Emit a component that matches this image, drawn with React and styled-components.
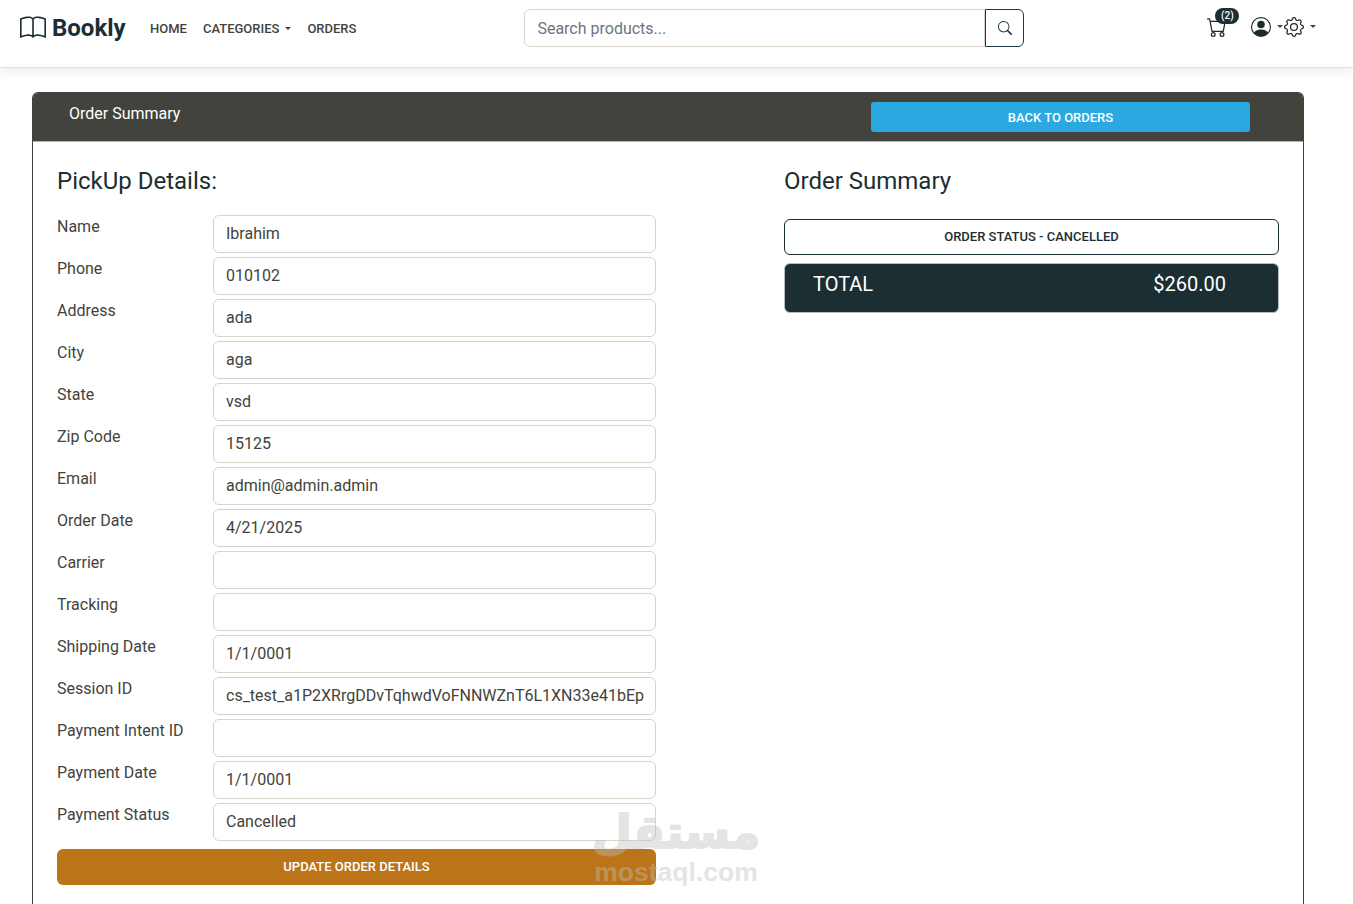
import React from 'react'
import styled, { createGlobalStyle } from 'styled-components'
import { BsBook, BsSearch, BsCart, BsPersonCircle, BsGear } from 'react-icons/bs'

const GlobalStyle = createGlobalStyle`
  html, body {
    margin: 0;
    padding: 0;
    background: #fff;
    height: 904px;
    overflow: hidden;
  }
  * { box-sizing: border-box; }
  body {
    font-family: Roboto, "Liberation Sans", sans-serif;
    font-size: 16px;
    color: #43433d;
  }
`

const Nav = styled.nav`
  display: flex;
  align-items: center;
  height: 68px;
  padding: 0 0 12px 20px;
  background: #fff;
  border-bottom: 1px solid #e4dfd6;
  box-shadow: 0 4px 10px rgba(0, 0, 0, 0.07);
`

const Brand = styled.div`
  display: flex;
  align-items: center;
  gap: 6px;
  width: 122px;
  font-size: 24px;
  font-weight: 700;
  color: #1b2e32;
  svg { font-size: 26px; }
`

const Menu = styled.div`
  display: flex;
  align-items: center;
  gap: 16px;
  margin: 1px 0 0 8px;
`

const MenuItem = styled.span`
  display: flex;
  align-items: center;
  font-size: 13px;
  font-weight: 500;
  color: #43433d;
`

const Caret = styled.i`
  display: inline-block;
  margin-left: ${(props) => props.$gap || 6}px;
  border-top: 3.5px solid #43433d;
  border-left: 3.5px solid transparent;
  border-right: 3.5px solid transparent;
`

const SearchBox = styled.div`
  display: flex;
  width: 500px;
  height: 38px;
  margin-left: 168px;
  margin-top: 1px;
`

const SearchInput = styled.div`
  flex: 1;
  display: flex;
  align-items: center;
  padding: 0 12px;
  border: 1px solid #d9d4c8;
  border-radius: 6px 0 0 6px;
  color: #6c757d;
`

const SearchButton = styled.div`
  width: 39px;
  display: flex;
  align-items: center;
  justify-content: center;
  border: 1px solid #1b3a44;
  border-radius: 0 6px 6px 0;
  color: #1b3a44;
  font-size: 14px;
`

const NavIcons = styled.div`
  display: flex;
  align-items: center;
  margin: 0 0 2px 183px;
  color: #1f2a2c;
`

const CartWrap = styled.div`
  position: relative;
  display: flex;
  width: 20px;
  margin-right: 24px;
  font-size: 20px;
`

const CartBadge = styled.span`
  position: absolute;
  top: -9px;
  left: 8px;
  width: 24px;
  height: 16px;
  border-radius: 8px;
  background: #1b2e32;
  color: #fff;
  font-size: 10px;
  font-weight: 500;
  display: flex;
  align-items: center;
  justify-content: center;
`

const GearIcon = styled(BsGear)`
  margin-left: 1px;
`

const Card = styled.section`
  height: 812px;
  margin: 24px 49px 0 32px;
  border: 1px solid #43433d;
  border-bottom: none;
  border-radius: 6px 6px 0 0;
  overflow: hidden;
`

const CardHeader = styled.header`
  display: flex;
  align-items: flex-start;
  justify-content: space-between;
  height: 49px;
  padding: 9px 53px 0 36px;
  background: #43433d;
  border-bottom: 1px solid #b9b5a8;
  color: #fff;
`

const HeaderTitle = styled.div`
  line-height: 24px;
`

const BackButton = styled.div`
  width: 379px;
  height: 30px;
  display: flex;
  align-items: center;
  justify-content: center;
  background: #2aa8df;
  border-radius: 3px;
  font-size: 13px;
  font-weight: 500;
`

const CardBody = styled.div`
  display: flex;
  justify-content: space-between;
  padding: 25px 24px 0;
`

const LeftCol = styled.div`
  width: 599px;
`

const RightCol = styled.div`
  width: 495px;
`

const Heading = styled.h4`
  margin: 0 0 19px;
  font-size: 24px;
  font-weight: 400;
  line-height: 29px;
  color: #1b2e32;
`

const FormRow = styled.div`
  display: flex;
  align-items: flex-start;
  margin-bottom: 4px;
`

const RowLabel = styled.label`
  width: 156px;
  line-height: 24px;
`

const Field = styled.div`
  width: 443px;
  height: 38px;
  display: flex;
  align-items: center;
  padding: 0 12px 2px;
  border: 1px solid #d9d4c8;
  border-radius: 6px;
  white-space: nowrap;
  overflow: hidden;
`

const UpdateButton = styled.div`
  height: 36px;
  margin-top: 8px;
  padding-bottom: 2px;
  display: flex;
  align-items: center;
  justify-content: center;
  background: #bc7418;
  border-radius: 6px;
  color: #fff;
  font-size: 13px;
  font-weight: 500;
`

const StatusBox = styled.div`
  height: 36px;
  margin-top: 23px;
  padding-bottom: 2px;
  display: flex;
  align-items: center;
  justify-content: center;
  border: 1px solid #1b2e32;
  border-radius: 6px;
  color: #1b2e32;
  font-size: 13px;
  font-weight: 500;
`

const TotalBox = styled.div`
  height: 50px;
  margin-top: 8px;
  padding: 0 52px 8px 28px;
  display: flex;
  align-items: center;
  justify-content: space-between;
  background: #1b2e32;
  border: 1px solid #b9bcb8;
  border-radius: 6px;
  color: #fff;
  font-size: 20px;
`

const Watermark = styled.div`
  position: absolute;
  left: 590px;
  top: 804px;
  width: 172px;
  display: flex;
  flex-direction: column;
  align-items: center;
  color: #bdbdbd;
  opacity: 0.4;
  font-family: "Liberation Sans", sans-serif;
  font-weight: 700;
  pointer-events: none;
`

const WatermarkArabic = styled.span`
  font-family: "DejaVu Sans", sans-serif;
  font-size: 46px;
  line-height: 56px;
  -webkit-text-stroke: 2px #bdbdbd;
`

const WatermarkLatin = styled.span`
  margin-top: -3px;
  font-size: 26.5px;
  line-height: 30px;
`

const fields = [
  ['Name', 'Ibrahim'],
  ['Phone', '010102'],
  ['Address', 'ada'],
  ['City', 'aga'],
  ['State', 'vsd'],
  ['Zip Code', '15125'],
  ['Email', 'admin@admin.admin'],
  ['Order Date', '4/21/2025'],
  ['Carrier', ''],
  ['Tracking', ''],
  ['Shipping Date', '1/1/0001'],
  ['Session ID', 'cs_test_a1P2XRrgDDvTqhwdVoFNNWZnT6L1XN33e41bEp'],
  ['Payment Intent ID', ''],
  ['Payment Date', '1/1/0001'],
  ['Payment Status', 'Cancelled'],
]

export default function App() {
  return (
    <>
      <GlobalStyle />
      <Nav>
        <Brand>
          <BsBook />
          Bookly
        </Brand>
        <Menu>
          <MenuItem>HOME</MenuItem>
          <MenuItem>
            CATEGORIES
            <Caret />
          </MenuItem>
          <MenuItem>ORDERS</MenuItem>
        </Menu>
        <SearchBox>
          <SearchInput>Search products...</SearchInput>
          <SearchButton>
            <BsSearch />
          </SearchButton>
        </SearchBox>
        <NavIcons>
          <CartWrap>
            <BsCart />
            <CartBadge>(2)</CartBadge>
          </CartWrap>
          <BsPersonCircle size={20} />
          <Caret $gap={6} />
          <GearIcon size={20} />
          <Caret $gap={6} />
        </NavIcons>
      </Nav>
      <Card>
        <CardHeader>
          <HeaderTitle>Order Summary</HeaderTitle>
          <BackButton>BACK TO ORDERS</BackButton>
        </CardHeader>
        <CardBody>
          <LeftCol>
            <Heading>PickUp Details:</Heading>
            {fields.map(([label, value]) => (
              <FormRow key={label}>
                <RowLabel>{label}</RowLabel>
                <Field>{value}</Field>
              </FormRow>
            ))}
            <UpdateButton>UPDATE ORDER DETAILS</UpdateButton>
          </LeftCol>
          <RightCol>
            <Heading>Order Summary</Heading>
            <StatusBox>ORDER STATUS - CANCELLED</StatusBox>
            <TotalBox>
              <span>TOTAL</span>
              <span>$260.00</span>
            </TotalBox>
          </RightCol>
        </CardBody>
      </Card>
      <Watermark>
        <WatermarkArabic>مستقل</WatermarkArabic>
        <WatermarkLatin>mostaql.com</WatermarkLatin>
      </Watermark>
    </>
  )
}
